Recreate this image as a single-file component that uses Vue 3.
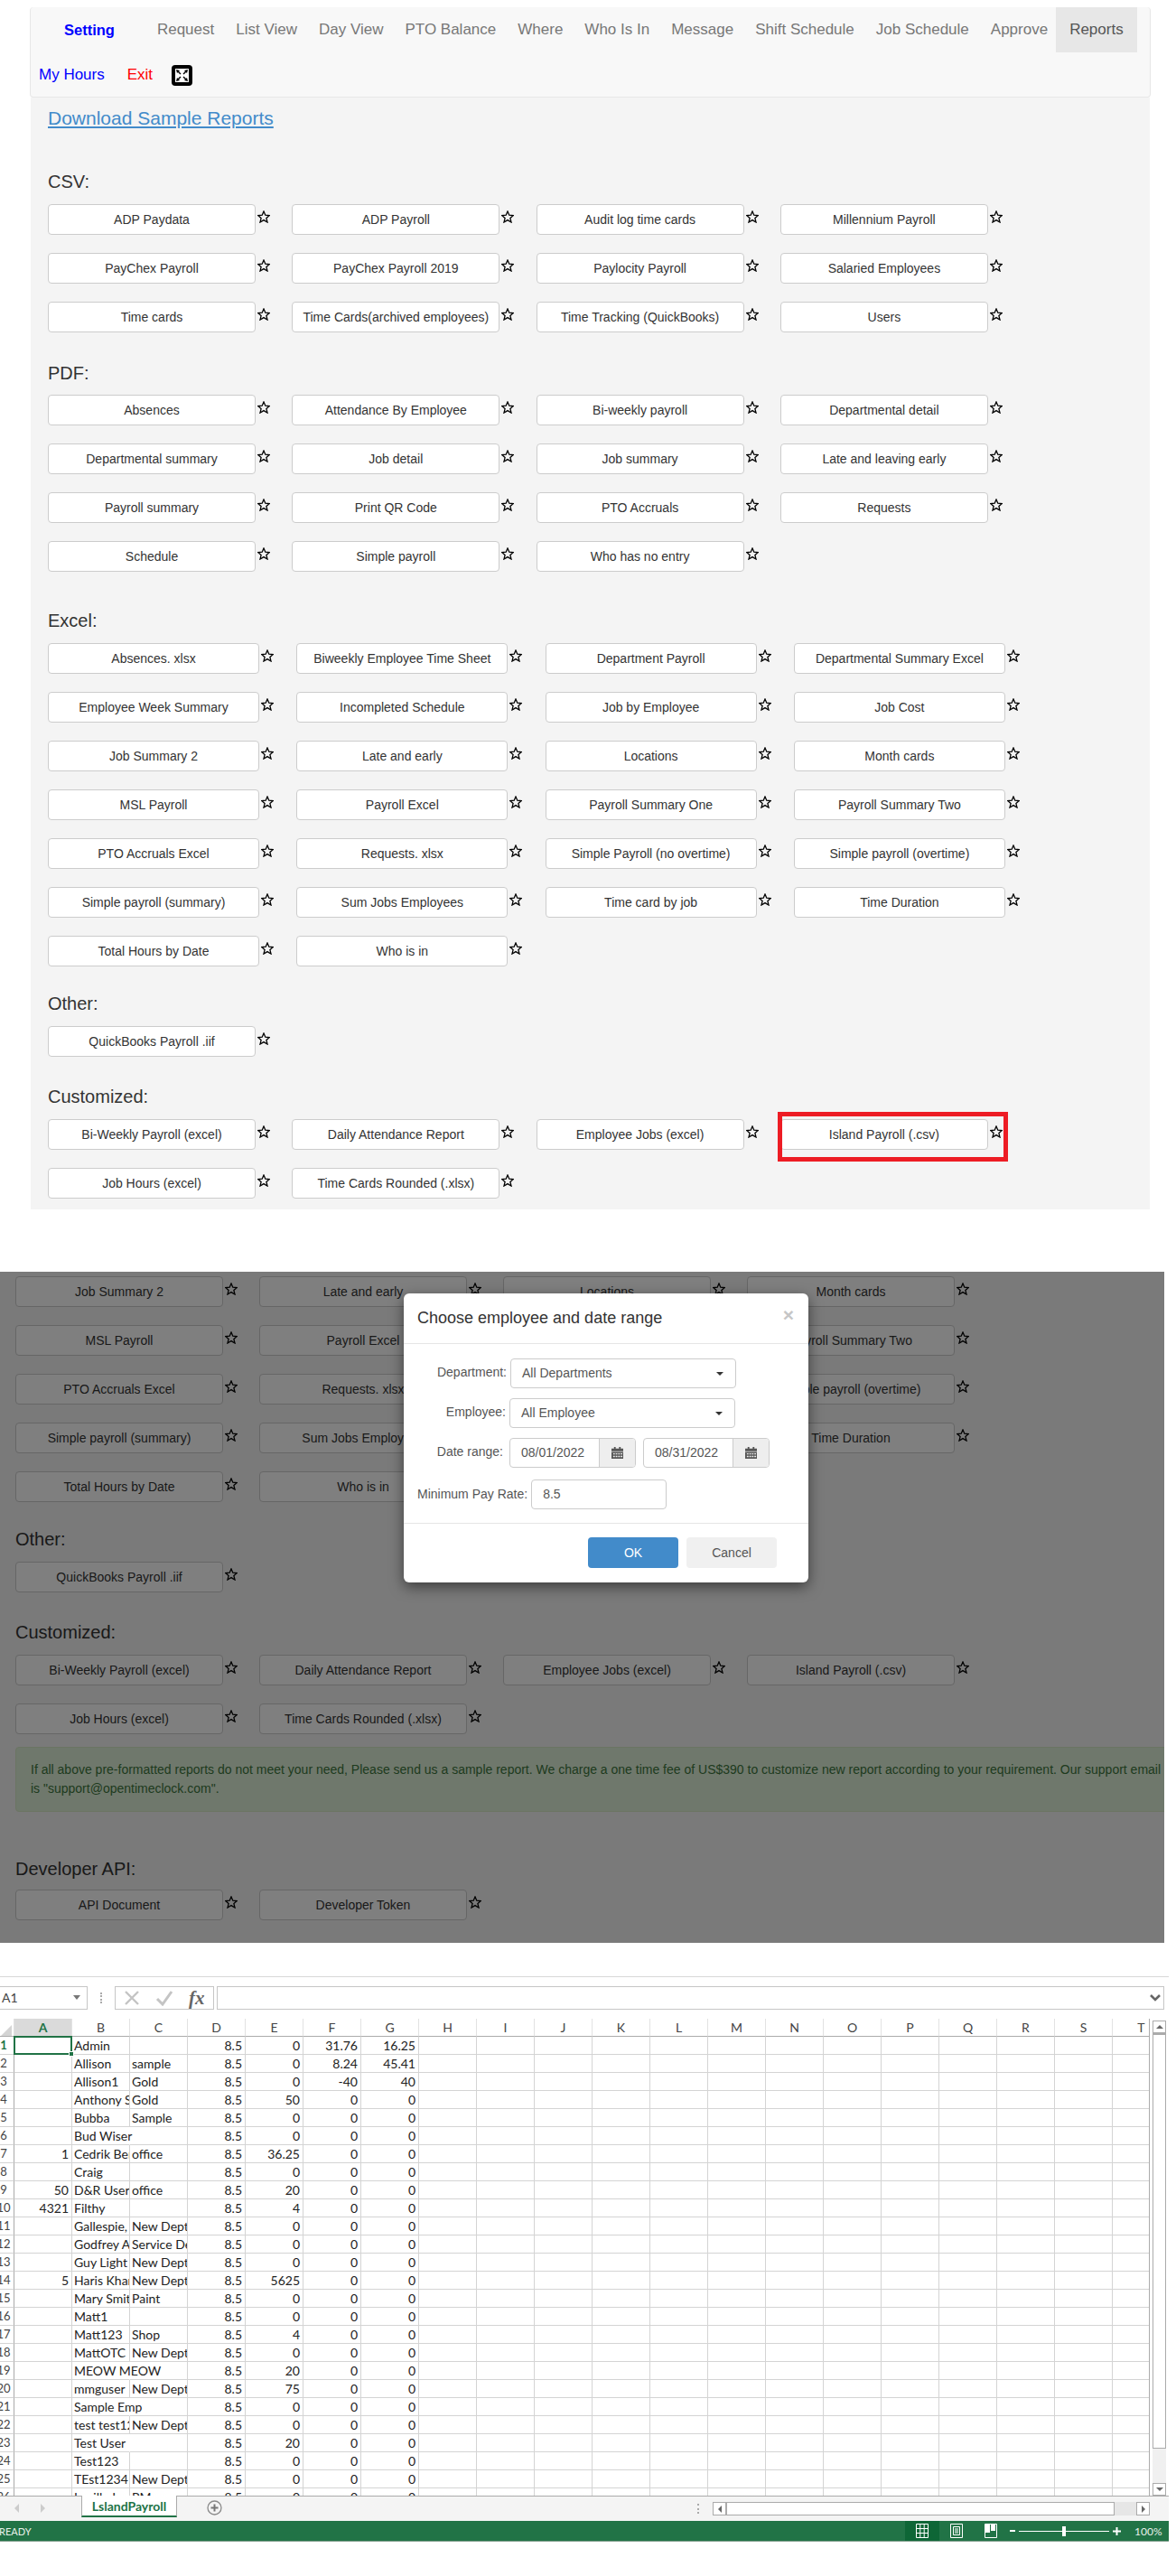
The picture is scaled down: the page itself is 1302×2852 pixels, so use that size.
<template>
  <div class="page">
    <!-- first capture: report list -->
    <nav class="navbar">
      <div class="nav-row">
        <a class="brand">Setting</a>
        <a v-for="link in navLinks" :key="link" class="nav-link">{{ link }}</a>
        <a class="nav-link active">Reports</a>
      </div>
      <div class="nav-row second">
        <a class="my-hours">My Hours</a>
        <a class="exit">Exit</a>
        <svg class="fullscreen" viewBox="0 0 23 23">
          <rect width="23" height="23" rx="4" fill="#000" />
          <rect x="4" y="4" width="15" height="15" fill="#fff" />
          <path d="M5 5l4 1-1 1 2.5 2.5-1 1L7 8 6 9zM18 5l-1 4-1-1-2.5 2.5-1-1L15 7l-1-1zM5 18l1-4 1 1 2.5-2.5 1 1L8 16l1 1zM18 18l-4-1 1-1-2.5-2.5 1-1L16 15l1-1z" fill="#000" />
        </svg>
      </div>
    </nav>

    <section class="panel">
      <a class="sample-link">Download Sample Reports</a>
      <div v-for="sec in topSections" :key="sec.title" class="section" :class="sec.cls">
        <h4>{{ sec.title }}</h4>
        <div class="btn-grid">
          <div v-for="item in sec.items" :key="item" class="item">
            <button class="report-btn">{{ item }}</button>
            <svg class="star" viewBox="0 0 14 14">
              <polygon points="7,1 8.8,5.2 13.3,5.6 9.9,8.6 11,13 7,10.6 3,13 4.1,8.6 0.7,5.6 5.2,5.2" />
            </svg>
            <span v-if="item === 'Island Payroll (.csv)'" class="red-box"></span>
          </div>
        </div>
      </div>
    </section>

    <!-- second capture: date range dialog -->
    <section class="lower">
      <div v-for="sec in lowerSections" :key="sec.title" class="section" :class="sec.cls">
        <h4 v-if="sec.title">{{ sec.title }}</h4>
        <div class="btn-grid">
          <div v-for="item in sec.items" :key="item" class="item">
            <button class="report-btn">{{ item }}</button>
            <svg class="star" viewBox="0 0 14 14">
              <polygon points="7,1 8.8,5.2 13.3,5.6 9.9,8.6 11,13 7,10.6 3,13 4.1,8.6 0.7,5.6 5.2,5.2" />
            </svg>
          </div>
        </div>
      </div>
      <div class="alert">
        If all above pre-formatted reports do not meet your need, Please send us a sample report. We charge a one time fee of US$390 to customize new report according to your requirement. Our support email is "support@opentimeclock.com".
      </div>
      <div class="section dev">
        <h4>Developer API:</h4>
        <div class="btn-grid">
          <div v-for="item in devItems" :key="item" class="item">
            <button class="report-btn">{{ item }}</button>
            <svg class="star" viewBox="0 0 14 14">
              <polygon points="7,1 8.8,5.2 13.3,5.6 9.9,8.6 11,13 7,10.6 3,13 4.1,8.6 0.7,5.6 5.2,5.2" />
            </svg>
          </div>
        </div>
      </div>

      <div class="backdrop"></div>
      <div class="modal">
        <div class="modal-header">
          <span class="modal-title">Choose employee and date range</span>
          <span class="close">×</span>
        </div>
        <div class="modal-body">
          <div class="form-row dep">
            <label>Department:</label>
            <div class="select">All Departments<i class="caret"></i></div>
          </div>
          <div class="form-row emp">
            <label>Employee:</label>
            <div class="select">All Employee<i class="caret"></i></div>
          </div>
          <div class="form-row range">
            <label>Date range:</label>
            <div v-for="d in dates" :key="d" class="date">
              <span class="date-value">{{ d }}</span>
              <span class="addon">
                <svg viewBox="0 0 14 14" width="13" height="13">
                  <path d="M3 0h2v2h4V0h2v2h3v3H0V2h3z" fill="#555" />
                  <path d="M0 6h14v8H0zM2 7.5v1.5h2V7.5zM5 7.5v1.5h2V7.5zM8 7.5v1.5h2V7.5zM11 7.5v1.5h2V7.5zM2 10.5V12h2v-1.5zM5 10.5V12h2v-1.5zM8 10.5V12h2v-1.5zM11 10.5V12h2v-1.5z" fill="#555" fill-rule="evenodd" />
                </svg>
              </span>
            </div>
          </div>
          <div class="form-row rate">
            <label>Minimum Pay Rate:</label>
            <div class="rate-input">8.5</div>
          </div>
        </div>
        <div class="modal-footer">
          <button class="btn-ok">OK</button>
          <button class="btn-cancel">Cancel</button>
        </div>
      </div>
    </section>

    <!-- third capture: spreadsheet -->
    <section class="xl">
      <div class="formula-bar">
        <div class="name-box">A1<i class="name-caret"></i></div>
        <span class="dots"></span>
        <div class="fx-box">
          <svg width="18" height="18" viewBox="0 0 18 18"><path d="M2 2l14 14M16 2L2 16" stroke="#c4c4c4" stroke-width="2.4" fill="none" /></svg>
          <svg width="20" height="18" viewBox="0 0 20 18"><path d="M2 10l6 6L18 2" stroke="#c4c4c4" stroke-width="3" fill="none" /></svg>
          <span class="fx">fx</span>
        </div>
        <div class="formula-input">
          <svg width="12" height="8" viewBox="0 0 12 8"><path d="M1 1l5 5 5-5" stroke="#666" stroke-width="2.6" fill="none" /></svg>
        </div>
      </div>

      <div class="sheet-area">
        <div class="sheet">
          <div class="corner"><i></i></div>
          <div v-for="c in columns" :key="c" class="col-head" :class="{ sel: c === 'A' }">{{ c }}</div>
          <template v-for="(row, r) in rows" :key="r">
            <div class="row-head" :class="{ sel: r === 0 }"><span>{{ r + 1 }}</span></div>
            <div
              v-for="(val, c) in row"
              :key="c"
              class="cell"
              :class="{ num: c === 0 || c > 2, spill: c === 1 && !row[2] && val.length > 8 }"
            >{{ val }}<template v-if="r === 0 && c === 0"><span class="cursor"><i></i></span></template></div>
          </template>
        </div>
        <div class="vscroll">
          <div class="v-btn"><i class="tri up"></i></div>
          <div class="v-thumb"></div>
          <div class="v-track"></div>
          <div class="v-btn"><i class="tri down"></i></div>
        </div>
      </div>

      <div class="tab-bar">
        <i class="tab-arrow left"></i>
        <i class="tab-arrow right"></i>
        <div class="tab">LslandPayroll</div>
        <svg class="add-sheet" width="17" height="17" viewBox="0 0 17 17">
          <circle cx="8.5" cy="8.5" r="7.5" fill="none" stroke="#8a8a8a" stroke-width="1.3" />
          <path d="M8.5 4.5v8M4.5 8.5h8" stroke="#777" stroke-width="2" />
        </svg>
        <span class="split-dots"></span>
        <div class="hscroll">
          <div class="h-btn"><i class="tri lft"></i></div>
          <div class="h-thumb"></div>
          <div class="h-track"></div>
          <div class="h-btn"><i class="tri rgt"></i></div>
        </div>
      </div>

      <div class="status-bar">
        <span class="ready">READY</span>
        <div class="view-btn on">
          <svg width="14" height="16" viewBox="0 0 14 16"><path d="M.5.5h13v15H.5zM.5 5.5h13M.5 10.5h13M4.8.5v15M9.2.5v15" stroke="#fff" fill="none" /></svg>
        </div>
        <div class="view-btn">
          <svg width="14" height="16" viewBox="0 0 14 16"><path d="M.5.5h13v15H.5zM3.5 3.5h7v9h-7zM5 6h4M5 8h4M5 10h4" stroke="#fff" fill="none" /></svg>
        </div>
        <div class="view-btn">
          <svg width="14" height="16" viewBox="0 0 14 16"><path d="M.5.5h13v15H.5z" stroke="#fff" fill="none" /><path d="M1 1h5v9H1zM7 1h5v7H7z" fill="#fff" /></svg>
        </div>
        <div class="zoom">
          <span class="minus"></span>
          <span class="slider"><i></i></span>
          <svg width="9" height="9" viewBox="0 0 9 9"><path d="M4.5 0v9M0 4.5h9" stroke="#fff" stroke-width="2" /></svg>
        </div>
        <span class="pct">100%</span>
      </div>
    </section>
  </div>
</template>

<script setup>
const navLinks = ['Request', 'List View', 'Day View', 'PTO Balance', 'Where', 'Who Is In', 'Message', 'Shift Schedule', 'Job Schedule', 'Approve']

const otherItems = ['QuickBooks Payroll .iif']
const customItems = ['Bi-Weekly Payroll (excel)', 'Daily Attendance Report', 'Employee Jobs (excel)', 'Island Payroll (.csv)', 'Job Hours (excel)', 'Time Cards Rounded (.xlsx)']

const topSections = [
  {
    title: 'CSV:',
    cls: 'csv',
    items: ['ADP Paydata', 'ADP Payroll', 'Audit log time cards', 'Millennium Payroll', 'PayChex Payroll', 'PayChex Payroll 2019', 'Paylocity Payroll', 'Salaried Employees', 'Time cards', 'Time Cards(archived employees)', 'Time Tracking (QuickBooks)', 'Users']
  },
  {
    title: 'PDF:',
    cls: 'pdf',
    items: ['Absences', 'Attendance By Employee', 'Bi-weekly payroll', 'Departmental detail', 'Departmental summary', 'Job detail', 'Job summary', 'Late and leaving early', 'Payroll summary', 'Print QR Code', 'PTO Accruals', 'Requests', 'Schedule', 'Simple payroll', 'Who has no entry']
  },
  {
    title: 'Excel:',
    cls: 'excel',
    items: ['Absences. xlsx', 'Biweekly Employee Time Sheet', 'Department Payroll', 'Departmental Summary Excel', 'Employee Week Summary', 'Incompleted Schedule', 'Job by Employee', 'Job Cost', 'Job Summary 2', 'Late and early', 'Locations', 'Month cards', 'MSL Payroll', 'Payroll Excel', 'Payroll Summary One', 'Payroll Summary Two', 'PTO Accruals Excel', 'Requests. xlsx', 'Simple Payroll (no overtime)', 'Simple payroll (overtime)', 'Simple payroll (summary)', 'Sum Jobs Employees', 'Time card by job', 'Time Duration', 'Total Hours by Date', 'Who is in']
  },
  { title: 'Other:', cls: 'other', items: otherItems },
  { title: 'Customized:', cls: 'custom', items: customItems }
]

const lowerSections = [
  {
    title: '',
    cls: 'rest',
    items: ['Job Summary 2', 'Late and early', 'Locations', 'Month cards', 'MSL Payroll', 'Payroll Excel', 'Payroll Summary One', 'Payroll Summary Two', 'PTO Accruals Excel', 'Requests. xlsx', 'Simple Payroll (no overtime)', 'Simple payroll (overtime)', 'Simple payroll (summary)', 'Sum Jobs Employees', 'Time card by job', 'Time Duration', 'Total Hours by Date', 'Who is in']
  },
  { title: 'Other:', cls: 'other2', items: otherItems },
  { title: 'Customized:', cls: 'custom', items: customItems }
]

const devItems = ['API Document', 'Developer Token']
const dates = ['08/01/2022', '08/31/2022']

const columns = 'ABCDEFGHIJKLMNOPQRST'.split('')

// A, B, C, then D..G; the rest of each row is empty
const sheetData = [
  ['', 'Admin', '', '8.5', '0', '31.76', '16.25'],
  ['', 'Allison', 'sample', '8.5', '0', '8.24', '45.41'],
  ['', 'Allison1', 'Gold', '8.5', '0', '-40', '40'],
  ['', 'Anthony S', 'Gold', '8.5', '50', '0', '0'],
  ['', 'Bubba', 'Sample', '8.5', '0', '0', '0'],
  ['', 'Bud Wiser', '', '8.5', '0', '0', '0'],
  ['1', 'Cedrik Ber', 'office', '8.5', '36.25', '0', '0'],
  ['', 'Craig', '', '8.5', '0', '0', '0'],
  ['50', 'D&R User', 'office', '8.5', '20', '0', '0'],
  ['4321', 'Filthy', '', '8.5', '4', '0', '0'],
  ['', 'Gallespie,', 'New Dept', '8.5', '0', '0', '0'],
  ['', 'Godfrey A', 'Service De', '8.5', '0', '0', '0'],
  ['', 'Guy Light', 'New Dept', '8.5', '0', '0', '0'],
  ['5', 'Haris Khar', 'New Dept', '8.5', '5625', '0', '0'],
  ['', 'Mary Smit', 'Paint', '8.5', '0', '0', '0'],
  ['', 'Matt1', '', '8.5', '0', '0', '0'],
  ['', 'Matt123', 'Shop', '8.5', '4', '0', '0'],
  ['', 'MattOTC', 'New Dept', '8.5', '0', '0', '0'],
  ['', 'MEOW MEOW', '', '8.5', '20', '0', '0'],
  ['', 'mmguser', 'New Dept', '8.5', '75', '0', '0'],
  ['', 'Sample Emp', '', '8.5', '0', '0', '0'],
  ['', 'test test12', 'New Dept', '8.5', '0', '0', '0'],
  ['', 'Test User', '', '8.5', '20', '0', '0'],
  ['', 'Test123', '', '8.5', '0', '0', '0'],
  ['', 'TEst1234', 'New Dept', '8.5', '0', '0', '0'],
  ['', 'Lucille L', 'PM', '8.5', '0', '0', '0']
]

const rows = sheetData.map((r) => [...r, ...Array(13).fill('')])
</script>

<style>
html,
body {
  margin: 0;
  background: #fff;
}
</style>

<style scoped>
.page {
  width: 1302px;
  height: 2852px;
  overflow: hidden;
  font-family: "Liberation Sans", Arial, sans-serif;
  font-size: 14px;
  color: #333;
  padding-top: 8px;
  box-sizing: border-box;
}

/* nav */
.navbar {
  margin-left: 33px;
  width: 1241px;
  height: 100px;
  box-sizing: border-box;
  background: #f8f8f8;
  border: 1px solid #e7e7e7;
  border-top: 0;
  border-radius: 4px;
  font-size: 17px;
}
.nav-row {
  display: flex;
  align-items: center;
  height: 50px;
}
.brand {
  margin-left: 37px;
  margin-right: 35px;
  color: #00f;
  font-weight: 700;
  font-size: 16.5px;
}
.nav-link {
  padding: 0 12px;
  line-height: 50px;
  color: #777;
  white-space: nowrap;
}
.nav-link.active {
  margin-left: -3px;
  padding: 0 15px;
  background: #e7e7e7;
  color: #555;
}
.second {
  padding-left: 9px;
}
.my-hours {
  color: #00f;
  margin-right: 25px;
}
.exit {
  color: #f00;
  margin-right: 21px;
}
.fullscreen {
  width: 23px;
  height: 23px;
}

/* report panel */
.panel {
  margin-left: 34px;
  width: 1239px;
  height: 1231px;
  box-sizing: border-box;
  padding: 11px 0 0 19px;
  background: #f4f4f4;
  margin-bottom: 69px;
}
.sample-link {
  display: block;
  font-size: 21px;
  line-height: 24px;
  color: #428bca;
  text-decoration: underline;
  margin-bottom: 47px;
}
h4 {
  margin: 0 0 14px;
  font-size: 20px;
  font-weight: 400;
  line-height: 22px;
  color: #333;
}
.btn-grid {
  display: flex;
  flex-wrap: wrap;
}
.item {
  position: relative;
  display: flex;
  align-items: flex-start;
  width: 270.3px;
  margin-bottom: 20px;
}
.report-btn {
  width: 230px;
  height: 34px;
  flex: none;
  padding: 0;
  box-sizing: border-box;
  background: #fff;
  border: 1px solid #ccc;
  border-radius: 4px;
  font: 14px "Liberation Sans", Arial, sans-serif;
  color: #333;
  white-space: nowrap;
}
.star {
  flex: none;
  width: 14px;
  height: 14px;
  margin: 7px 0 0 2px;
  fill: none;
  stroke: #000;
  stroke-width: 1.3;
}
.pdf {
  margin-top: 14px;
}
.pdf h4 {
  margin-bottom: 13px;
}
.excel {
  margin-top: 23px;
}
.excel .item {
  width: 275.3px;
}
.excel .report-btn {
  width: 234px;
}
.other {
  margin-top: 10px;
}
.custom {
  margin-top: 13px;
}
.red-box {
  position: absolute;
  left: -3px;
  top: -8px;
  width: 255px;
  height: 55px;
  box-sizing: border-box;
  border: 5px solid #ed1c24;
}

/* dialog capture */
.lower {
  position: relative;
  width: 1289px;
  height: 743px;
  box-sizing: border-box;
  padding: 5px 0 0 17px;
  background: #f4f4f4;
  overflow: hidden;
  margin-bottom: 37px;
}
.lower .item {
  width: 270px;
}
.other2 {
  margin-top: 10px;
}
.alert {
  width: 1288px;
  box-sizing: border-box;
  margin-top: -6px;
  padding: 14px 16px;
  background: #dff0d8;
  border: 1px solid #d6e9c6;
  border-radius: 4px;
  color: #3c763d;
  line-height: 21px;
}
.dev {
  margin-top: 52px;
}
.dev h4 {
  margin-bottom: 12px;
}
.backdrop {
  position: absolute;
  inset: 0;
  background: rgba(0, 0, 0, 0.5);
}
.modal {
  position: absolute;
  left: 447px;
  top: 24px;
  width: 448px;
  height: 320px;
  background: #fff;
  border-radius: 6px;
  box-shadow: 0 5px 15px rgba(0, 0, 0, 0.5);
  color: #555;
}
.modal-header {
  display: flex;
  align-items: center;
  justify-content: space-between;
  height: 56px;
  box-sizing: border-box;
  padding: 0 15px;
  border-bottom: 1px solid #e5e5e5;
}
.modal-title {
  font-size: 18px;
  color: #333;
}
.close {
  font-size: 21px;
  font-weight: 700;
  color: #c6c6c6;
  line-height: 1;
  margin: -8px 1px 0 0;
}
.modal-body {
  height: 199px;
  box-sizing: border-box;
  padding: 16px 0 0 15px;
  border-bottom: 1px solid #e5e5e5;
}
.form-row {
  display: flex;
  height: 33px;
  margin-bottom: 11px;
}
.form-row label {
  flex: none;
  line-height: 30px;
  text-align: right;
}
.dep label {
  width: 99px;
  margin-right: 4px;
}
.emp label {
  width: 98px;
  margin-right: 4px;
}
.range label {
  width: 95px;
  margin-right: 7px;
}
.rate {
  margin-top: 13px;
  margin-bottom: 0;
}
.rate label {
  margin-right: 4px;
  line-height: 32px;
}
.select {
  position: relative;
  width: 250px;
  box-sizing: border-box;
  padding-left: 12px;
  line-height: 31px;
  border: 1px solid #ccc;
  border-radius: 4px;
}
.caret {
  position: absolute;
  right: 13px;
  top: 14px;
  border-top: 4px solid #333;
  border-left: 4px solid transparent;
  border-right: 4px solid transparent;
}
.date {
  display: flex;
  width: 140px;
  box-sizing: border-box;
  margin-right: 8px;
  border: 1px solid #ccc;
  border-radius: 4px;
  overflow: hidden;
}
.date-value {
  flex: 1;
  padding-left: 12px;
  line-height: 31px;
}
.addon {
  display: flex;
  align-items: center;
  justify-content: center;
  width: 39px;
  background: #eee;
  border-left: 1px solid #ccc;
}
.rate-input {
  width: 150px;
  box-sizing: border-box;
  padding-left: 12px;
  line-height: 31px;
  border: 1px solid #ccc;
  border-radius: 4px;
}
.modal-footer {
  display: flex;
  gap: 9px;
  padding: 15px 0 0 204px;
}
.btn-ok,
.btn-cancel {
  width: 100px;
  height: 34px;
  padding: 0;
  border: 0;
  border-radius: 4px;
  font: 14px "Liberation Sans", Arial, sans-serif;
}
.btn-ok {
  background: #428bca;
  color: #fff;
}
.btn-cancel {
  background: #f0f0f0;
  color: #555;
}

/* spreadsheet capture */
.xl {
  width: 1294px;
  font-family: Lato, "Liberation Sans", sans-serif;
  color: #222;
  border-top: 1px solid #d8d8d8;
}
.formula-bar {
  display: flex;
  align-items: stretch;
  height: 26px;
  margin: 10px 0 10px;
}
.name-box {
  position: relative;
  width: 97px;
  box-sizing: border-box;
  padding-left: 2px;
  line-height: 24px;
  font-size: 14px;
  color: #444;
  border: 1px solid #c6c6c6;
  border-left: 0;
}
.name-caret {
  position: absolute;
  right: 7px;
  top: 9px;
  border-top: 5px solid #777;
  border-left: 4px solid transparent;
  border-right: 4px solid transparent;
}
.dots {
  width: 2px;
  height: 12px;
  margin: 7px 14px;
  border-left: 2px dotted #aaa;
  box-sizing: border-box;
}
.fx-box {
  display: flex;
  align-items: center;
  gap: 17px;
  width: 110px;
  box-sizing: border-box;
  padding-left: 9px;
  border: 1px solid #c6c6c6;
}
.fx {
  font: italic 700 21px "Liberation Serif", serif;
  color: #666;
  line-height: 20px;
}
.formula-input {
  display: flex;
  align-items: center;
  justify-content: flex-end;
  flex: none;
  width: 1049px;
  margin-left: 3px;
  box-sizing: border-box;
  padding-right: 3px;
  border: 1px solid #c6c6c6;
}
.sheet-area {
  display: flex;
  height: 528px;
}
.sheet {
  display: grid;
  grid-template-columns: 16px repeat(20, 64px);
  grid-auto-rows: 20px;
  width: 1273px;
  height: 528px;
  box-sizing: border-box;
  overflow: hidden;
  font-size: 14px;
  border-right: 1px solid #ababab;
}
.corner {
  overflow: hidden;
  border-right: 1px solid #e0e0e0;
  border-bottom: 1px solid #ababab;
}
.corner i {
  display: block;
  margin: 7px 0 0 1px;
  border-bottom: 12px solid #d4d4d4;
  border-left: 12px solid transparent;
  width: 0;
}
.col-head {
  text-align: center;
  line-height: 19px;
  color: #444;
  box-sizing: border-box;
  border-right: 1px solid #e2e2e2;
  border-bottom: 1px solid #ababab;
}
.col-head.sel {
  background: #dadada;
  color: #217346;
  font-weight: 700;
}
.row-head {
  overflow: hidden;
  box-sizing: border-box;
  line-height: 19px;
  font-size: 13px;
  color: #444;
  border-right: 1px solid #ababab;
  border-bottom: 1px solid #d4d4d4;
}
.row-head span {
  display: block;
  width: 24px;
  margin-left: -8px;
  text-align: center;
}
.row-head.sel {
  color: #217346;
  font-weight: 700;
}
.cell {
  position: relative;
  box-sizing: border-box;
  padding: 0 3px 0 2px;
  line-height: 19px;
  white-space: nowrap;
  overflow: hidden;
  border-right: 1px solid #d4d4d4;
  border-bottom: 1px solid #d4d4d4;
}
.cell.num {
  text-align: right;
}
.cell.spill {
  overflow: visible;
  border-right-color: transparent;
}
.cell:has(.cursor) {
  overflow: visible;
  z-index: 1;
}
.cursor {
  position: absolute;
  left: -1px;
  top: -1px;
  width: 65px;
  height: 21px;
  box-sizing: border-box;
  border: 2px solid #217346;
}
.cursor i {
  position: absolute;
  right: -4px;
  bottom: -4px;
  width: 6px;
  height: 6px;
  background: #217346;
  border: 1px solid #fff;
  box-sizing: border-box;
}
.vscroll {
  display: flex;
  flex-direction: column;
  width: 15px;
  margin: 2px 0 0 3px;
}
.v-btn {
  display: flex;
  align-items: center;
  justify-content: center;
  flex: none;
  height: 14px;
  box-sizing: border-box;
  border: 1px solid #ababab;
  background: #fff;
}
.v-thumb {
  flex: none;
  height: 460px;
  box-sizing: border-box;
  border: 1px solid #ababab;
  border-top-width: 2px;
  background: #fff;
}
.v-track {
  flex: 1;
  background: #f0f0f0;
}
.tri {
  display: block;
  width: 0;
  height: 0;
}
.tri.up {
  border-bottom: 4px solid #666;
  border-left: 4px solid transparent;
  border-right: 4px solid transparent;
}
.tri.down {
  border-top: 4px solid #666;
  border-left: 4px solid transparent;
  border-right: 4px solid transparent;
}
.tri.lft {
  border-right: 4px solid #666;
  border-top: 4px solid transparent;
  border-bottom: 4px solid transparent;
}
.tri.rgt {
  border-left: 4px solid #666;
  border-top: 4px solid transparent;
  border-bottom: 4px solid transparent;
}
.tab-bar {
  display: flex;
  align-items: flex-start;
  height: 28px;
  box-sizing: border-box;
  background: #f4f4f4;
  border-top: 1px solid #ababab;
}
.tab-arrow {
  flex: none;
  width: 0;
  height: 0;
  margin-top: 8px;
  border-top: 5px solid transparent;
  border-bottom: 5px solid transparent;
}
.tab-arrow.left {
  margin-left: 16px;
  border-right: 5px solid #ccc;
}
.tab-arrow.right {
  margin-left: 24px;
  border-left: 5px solid #ccc;
}
.tab {
  flex: none;
  width: 106px;
  height: 24px;
  margin: -1px 0 0 40px;
  box-sizing: border-box;
  background: #fff;
  border: 1px solid #ababab;
  border-top: 0;
  border-bottom: 2px solid #217346;
  text-align: center;
  line-height: 24px;
  font-weight: 700;
  color: #217346;
}
.add-sheet {
  flex: none;
  margin: 4px 0 0 33px;
}
.split-dots {
  flex: none;
  width: 2px;
  height: 11px;
  margin: 8px 13px 0 526px;
  border-left: 2px dotted #aaa;
}
.hscroll {
  display: flex;
  flex: none;
  width: 484px;
  height: 15px;
  margin-top: 6px;
}
.h-btn {
  display: flex;
  align-items: center;
  justify-content: center;
  flex: none;
  width: 15px;
  box-sizing: border-box;
  border: 1px solid #ababab;
  background: #fff;
}
.h-thumb {
  flex: none;
  width: 430px;
  box-sizing: border-box;
  border: 1px solid #ababab;
  background: #fff;
}
.h-track {
  flex: 1;
  background: #e6e6e6;
}
.status-bar {
  display: flex;
  align-items: center;
  height: 22px;
  background: #217346;
  color: #e8f0ea;
  font-size: 11px;
  border-bottom: 1px solid #7f9d8b;
  box-sizing: content-box;
}
.ready {
  width: 1002px;
  flex: none;
  margin-left: -1px;
  margin-right: 1px;
}
.view-btn {
  display: flex;
  align-items: center;
  justify-content: center;
  flex: none;
  width: 38px;
  height: 22px;
}
.view-btn.on {
  background: #0e6636;
}
.zoom {
  display: flex;
  align-items: center;
  margin-left: 2px;
}
.minus {
  width: 6px;
  height: 2px;
  background: #fff;
  margin-right: 4px;
}
.slider {
  position: relative;
  width: 100px;
  height: 1px;
  background: #fff;
  margin-right: 4px;
}
.slider i {
  position: absolute;
  left: 48px;
  top: -5px;
  width: 4px;
  height: 11px;
  background: #fff;
}
.pct {
  margin-left: 15px;
  font-size: 12px;
}
</style>
